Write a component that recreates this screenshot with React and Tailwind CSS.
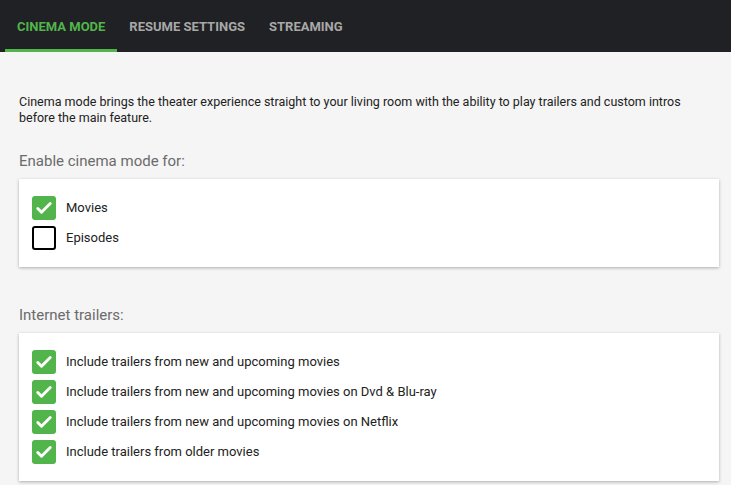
import React from 'react'

function Check({ checked, label }) {
    return (
        <label className="flex items-center h-[30px]">
            {checked ? (
                <span className="w-6 h-6 rounded-[3px] bg-[#52b54b] flex items-center justify-center">
                    <svg className="w-[20px] h-[20px]" viewBox="0 0 24 24" fill="none" stroke="white" strokeWidth="3.4" strokeLinecap="round" strokeLinejoin="round">
                        <path d="M4.5 12.5l4.5 4.5L19.5 6.5" />
                    </svg>
                </span>
            ) : (
                <span className="w-6 h-6 rounded-[3px] border-2 border-black bg-white"></span>
            )}
            <span className="ml-[10px] text-[13px] text-[#222]">{label}</span>
        </label>
    )
}

export default function App() {
    const tabs = ['Cinema Mode', 'Resume Settings', 'Streaming']
    return (
        <div className="w-[731px] h-[485px] overflow-hidden bg-[#f5f5f5]" style={{ fontFamily: 'Roboto, "Liberation Sans", sans-serif' }}>
            <div className="h-[52px] bg-[#202124] flex items-end pl-[5px]">
                {tabs.map((t, i) => (
                    <div
                        key={t}
                        className={
                            'px-3 h-[52px] flex items-center uppercase font-bold text-[13px] border-b-[3px] pt-[4px] ' +
                            (i === 0 ? 'text-[#52b54b] border-[#52b54b]' : 'text-[#a8a8a8] border-transparent')
                        }
                    >
                        {t}
                    </div>
                ))}
            </div>

            <div className="pl-[19px] pr-[12px] pt-[42px]">
                <p className="text-[12.5px] leading-4 text-[#222]">
                    Cinema mode brings the theater experience straight to your living room with the ability to play trailers and custom intros before the main feature.
                </p>

                <h2 className="mt-[25px] text-[15px] text-[#6b6b6b] leading-5">Enable cinema mode for:</h2>
                <div className="mt-[8px] bg-white shadow-[0_1px_3px_rgba(0,0,0,0.3)] pl-[13px] py-[14px]">
                    <Check checked label="Movies" />
                    <Check label="Episodes" />
                </div>

                <h2 className="mt-[38px] text-[15px] text-[#6b6b6b] leading-5">Internet trailers:</h2>
                <div className="mt-[8px] bg-white shadow-[0_1px_3px_rgba(0,0,0,0.3)] pl-[13px] py-[14px]">
                    <Check checked label="Include trailers from new and upcoming movies" />
                    <Check checked label="Include trailers from new and upcoming movies on Dvd & Blu-ray" />
                    <Check checked label="Include trailers from new and upcoming movies on Netflix" />
                    <Check checked label="Include trailers from older movies" />
                </div>
            </div>
        </div>
    )
}
